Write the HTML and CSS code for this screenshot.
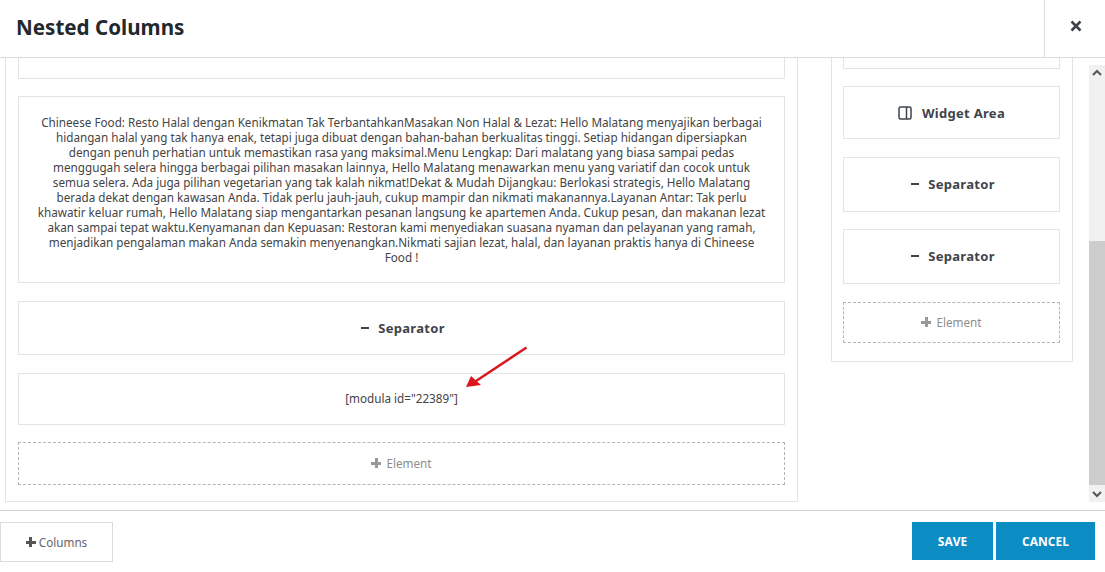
FILE: index.html
```html
<!DOCTYPE html>
<html lang="id">
<head>
<meta charset="UTF-8">
<title>Nested Columns</title>
<link rel="stylesheet" href="styles.css">
</head>
<body>

<div class="modal">
    <header class="modal-head">
        <h1 class="modal-title">Nested Columns</h1>
        <button class="modal-close" type="button" aria-label="Close">
            <svg width="12" height="12" viewBox="0 0 12 12"><path d="M1.5 1.5l9 9M10.5 1.5l-9 9" stroke="#3f444b" stroke-width="2.6" fill="none"/></svg>
        </button>
    </header>

    <div class="modal-body">
        <div class="col col-main">
            <div class="item item-cut-main"></div>
            <div class="item item-text">Chineese Food: Resto Halal dengan Kenikmatan Tak TerbantahkanMasakan Non Halal &amp; Lezat: Hello Malatang menyajikan berbagai<br>
            hidangan halal yang tak hanya enak, tetapi juga dibuat dengan bahan-bahan berkualitas tinggi. Setiap hidangan dipersiapkan<br>
            dengan penuh perhatian untuk memastikan rasa yang maksimal.Menu Lengkap: Dari malatang yang biasa sampai pedas<br>
            menggugah selera hingga berbagai pilihan masakan lainnya, Hello Malatang menawarkan menu yang variatif dan cocok untuk<br>
            semua selera. Ada juga pilihan vegetarian yang tak kalah nikmat!Dekat &amp; Mudah Dijangkau: Berlokasi strategis, Hello Malatang<br>
            berada dekat dengan kawasan Anda. Tidak perlu jauh-jauh, cukup mampir dan nikmati makanannya.Layanan Antar: Tak perlu<br>
            khawatir keluar rumah, Hello Malatang siap mengantarkan pesanan langsung ke apartemen Anda. Cukup pesan, dan makanan lezat<br>
            akan sampai tepat waktu.Kenyamanan dan Kepuasan: Restoran kami menyediakan suasana nyaman dan pelayanan yang ramah,<br>
            menjadikan pengalaman makan Anda semakin menyenangkan.Nikmati sajian lezat, halal, dan layanan praktis hanya di Chineese<br>
            Food !</div>
            <div class="item item-widget sep-main"><span class="dash"></span>Separator</div>
            <div class="item item-short">[modula id="22389"]</div>
            <div class="add-element add-main"><span class="plus"></span>Element</div>
        </div>

        <div class="col col-side">
            <div class="item item-cut-side"></div>
            <div class="item item-widget side-widget">
                <svg class="area-icon" width="14" height="14" viewBox="0 0 14 14"><rect x="1" y="1" width="12" height="12" rx="1.5" fill="none" stroke="#3f444b" stroke-width="1.5"/><path d="M8.5 1v12" stroke="#3f444b" stroke-width="1.5"/></svg>Widget Area
            </div>
            <div class="item item-widget side-sep"><span class="dash"></span>Separator</div>
            <div class="item item-widget side-sep"><span class="dash"></span>Separator</div>
            <div class="add-element add-side"><span class="plus"></span>Element</div>
        </div>

        <div class="scrollbar">
            <svg class="scroll-arrow" width="16" height="16" viewBox="0 0 16 16"><path d="M4 10l4-4 4 4" stroke="#555" stroke-width="2" fill="none"/></svg>
            <div class="scroll-track"><div class="scroll-thumb"></div></div>
            <svg class="scroll-arrow" width="16" height="16" viewBox="0 0 16 16"><path d="M4 6l4 4 4-4" stroke="#555" stroke-width="2" fill="none"/></svg>
        </div>

        <svg class="red-arrow" width="70" height="46" viewBox="0 0 70 46">
            <path d="M64.5 1.5L14 35" stroke="#dc161d" stroke-width="2.6" fill="none"/>
            <path d="M4 41L9 30L19 39Z" fill="#dc161d"/>
        </svg>
    </div>

    <footer class="modal-foot">
        <button class="btn-columns" type="button"><span class="plus plus-dark"></span>Columns</button>
        <div class="foot-actions">
            <button class="btn-blue btn-save" type="button">SAVE</button>
            <button class="btn-blue btn-cancel" type="button">CANCEL</button>
        </div>
    </footer>
</div>

</body>
</html>
```

FILE: styles.css
```css
html, body {
    margin: 0;
    height: 100%;
}
body {
    font-family: "Noto Sans", "Open Sans", sans-serif;
    font-size: 11.7px;
    color: #444;
    background: #fff;
    overflow: hidden;
}
.modal {
    display: flex;
    flex-direction: column;
    height: 572px;
}
.modal-head {
    display: flex;
    justify-content: space-between;
    height: 57px;
    flex: none;
    border-bottom: 1px solid #dcdcdc;
}
.modal-title {
    margin: 0;
    padding-left: 16px;
    font-size: 20.6px;
    line-height: 54px;
    font-weight: 700;
    color: #23282d;
}
.modal-close {
    width: 61px;
    padding: 0 0 3px 2px;
    background: none;
    border: none;
    border-left: 1px solid #dcdcdc;
}
.modal-body {
    position: relative;
    display: flex;
    align-items: flex-start;
    height: 452px;
    flex: none;
    overflow: hidden;
}
.col {
    box-sizing: border-box;
    flex: none;
    border: 1px solid #e4e4e4;
    border-top: none;
}
.col-main {
    width: 793px;
    margin-left: 5px;
    height: 444px;
    padding: 0 12px;
}
.col-side {
    width: 242px;
    margin-left: 33px;
    height: 304px;
    padding: 0 12px 0 11px;
}
.item {
    box-sizing: border-box;
    border: 1px solid #e4e4e4;
    text-align: center;
}
.item-cut-main {
    height: 21px;
    border-top: none;
}
.item-cut-side {
    height: 11px;
    border-top: none;
}
.item-text {
    height: 187px;
    margin-top: 17px;
    padding: 18px 0 0;
    line-height: 15px;
}
.item-widget {
    display: flex;
    align-items: center;
    justify-content: center;
    font-size: 13px;
    font-weight: 700;
    letter-spacing: 0.3px;
    color: #3f444b;
}
.sep-main {
    height: 54px;
    margin-top: 18px;
}
.item-short {
    height: 52px;
    margin-top: 18px;
    line-height: 49px;
}
.side-widget {
    height: 53px;
    margin-top: 17px;
}
.side-sep {
    height: 55px;
    margin-top: 18px;
    padding-bottom: 2px;
}
.side-sep + .side-sep {
    margin-top: 17px;
}
.dash {
    width: 8px;
    height: 2px;
    margin: 0 9px 0 3px;
    background: #3f444b;
}
.area-icon {
    margin-right: 10px;
}
.add-element {
    box-sizing: border-box;
    display: flex;
    align-items: center;
    justify-content: center;
    padding-bottom: 1px;
    border: 1px dashed #b5b5b5;
    color: #8d8d8d;
}
.add-main {
    height: 43px;
    margin-top: 17px;
}
.add-side {
    height: 41px;
    margin-top: 18px;
}
.plus {
    display: inline-block;
    width: 10px;
    height: 10px;
    margin-right: 5px;
    background:
        linear-gradient(#999, #999) center / 10px 3px no-repeat,
        linear-gradient(#999, #999) center / 3px 10px no-repeat;
}
.plus-dark {
    margin-right: 3px;
    background:
        linear-gradient(#555, #555) center / 10px 3px no-repeat,
        linear-gradient(#555, #555) center / 3px 10px no-repeat;
}
.scrollbar {
    display: flex;
    flex: none;
    flex-direction: column;
    width: 16px;
    height: 437px;
    margin: 7px 0 0 16px;
    background: #f1f1f1;
}
.scroll-arrow {
    flex: none;
}
.scroll-track {
    flex: 1;
    padding-top: 160px;
    box-sizing: border-box;
}
.scroll-thumb {
    height: 244px;
    background: #cdcdcd;
}
.red-arrow {
    position: absolute;
    left: 462px;
    top: 288px;
}
.modal-foot {
    display: flex;
    justify-content: space-between;
    align-items: flex-start;
    flex: 1;
    border-top: 1px solid #d4d4d4;
    padding: 11px 10px 0 0;
}
.btn-columns {
    display: flex;
    align-items: center;
    justify-content: center;
    width: 113px;
    height: 40px;
    background: #fff;
    border: 1px solid #dcdcdc;
    font: 11.7px "Noto Sans", sans-serif;
    color: #666;
}
.foot-actions {
    display: flex;
    gap: 3px;
}
.btn-blue {
    height: 38px;
    padding: 0;
    background: #0b8dc4;
    border: none;
    font: 700 12px "Open Sans", sans-serif;
    color: #fff;
}
.btn-save {
    width: 81px;
}
.btn-cancel {
    width: 99px;
}
```
